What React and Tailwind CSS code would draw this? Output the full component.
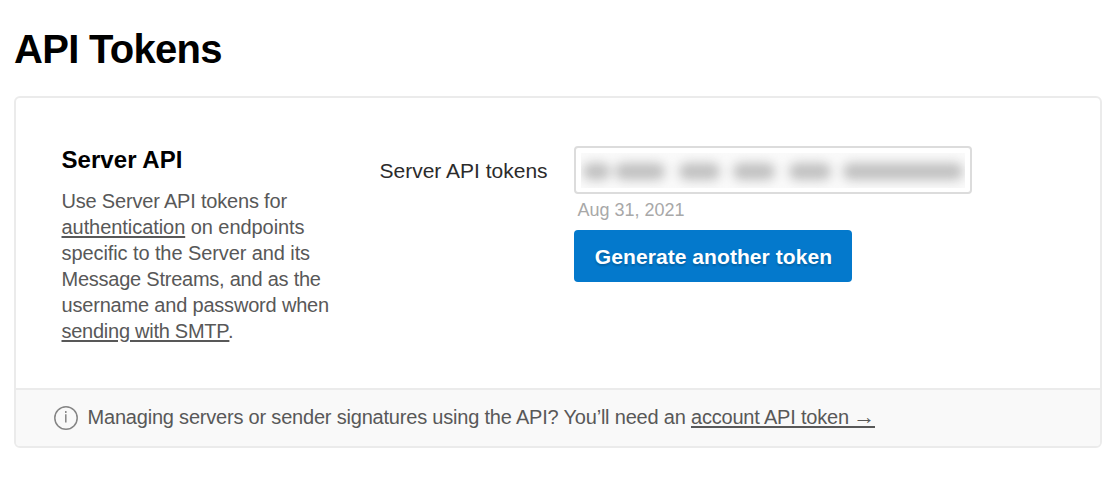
const link = "underline decoration-2 underline-offset-2";

// Widths and gaps of the obscured token groups
const tokenGroups = [
  { width: 27, gap: 5 },
  { width: 50, gap: 14 },
  { width: 41, gap: 13 },
  { width: 42, gap: 14 },
  { width: 42, gap: 12 },
  { width: 120, gap: 0 },
];

function InfoIcon() {
  return (
    <svg width="24" height="24" viewBox="0 0 24 24" fill="none" className="shrink-0">
      <circle cx="12" cy="12" r="11.2" stroke="#858585" strokeWidth="1.5" />
      <path d="M11.8 5V7M11.8 8.2V16.6" stroke="#858585" strokeWidth="1.5" />
    </svg>
  );
}

function MaskedToken() {
  return (
    <div className="flex h-12 w-[398px] items-center rounded-[4px] border-2 border-[#dcdcdc] bg-white px-[5px]">
      <div className="flex h-[35px] w-full items-center overflow-hidden bg-[#fafafa] pt-[3px] pl-[2px]">
        <div className="flex blur-[5.5px]">
          {tokenGroups.map(({ width, gap }, i) => (
            <span
              key={i}
              className="h-[17px] shrink-0 rounded-lg bg-[#c0c0c0]"
              style={{ width, marginRight: gap }}
            />
          ))}
        </div>
      </div>
    </div>
  );
}

export default function App() {
  return (
    <div className="min-h-[489px] w-[1116px] bg-white px-[14px] pt-[25px] font-['Liberation_Sans',Arial,sans-serif] text-xl leading-[26px] tracking-[-0.19px] text-[#585858]">
      <h1 className="text-[40px] leading-[48px] font-bold tracking-[-0.7px] text-black">
        API Tokens
      </h1>

      <section className="mt-[23px] w-[1088px] overflow-hidden rounded-[6px] border-2 border-[#ebebeb]">
        <div className="flex h-[290px] pl-[45.5px]">
          {/* Description */}
          <div className="w-[318px] pt-[47px]">
            <h2 className="text-2xl leading-[30px] font-bold tracking-[0.05px] text-black">
              Server API
            </h2>
            <p className="mt-[13px] whitespace-nowrap">
              Use Server API tokens for
              <br />
              <span className="tracking-[-0.06px]">
                <a className={link}>authentication</a> on endpoints
              </span>
              <br />
              <span className="tracking-[-0.09px]">specific to the Server and its</span>
              <br />
              <span className="tracking-[-0.24px]">Message Streams, and as the</span>
              <br />
              username and password when
              <br />
              <span className="tracking-[-0.26px]">
                <a className={link}>sending with SMTP</a>
              </span>
              <span className="-ml-[1.5px]">.</span>
            </p>
          </div>

          {/* Tokens */}
          <div className="w-[194.5px] pt-[60px] text-[21px] tracking-normal text-[#2b2b2b]">
            Server API tokens
          </div>
          <div className="pt-12">
            <MaskedToken />
            <p className="mt-[5px] pl-[3.5px] text-lg leading-[22px] tracking-normal text-[#a8a8a8]">
              Aug 31, 2021
            </p>
            <button className="mt-[9px] flex h-[52px] w-[278px] items-center justify-center rounded-[4px] bg-[#0479cc] pt-px pl-px text-[21px] font-bold tracking-[0.07px] text-white text-shadow-[0_2px_2px_rgb(0_0_0/0.2)]">
              Generate another token
            </button>
          </div>
        </div>

        {/* Footer note */}
        <div className="flex h-[58px] items-center gap-[9.5px] border-t-2 border-[#ebebeb] bg-[#f9f9f9] pl-[38px]">
          <InfoIcon />
          <p className="-mt-0.5 whitespace-nowrap tracking-[-0.2px]">
            Managing servers or sender signatures using the API? You’ll need an{" "}
            <a className={link}>
              account API token <span className="-ml-px text-[22px] leading-none">→</span>
            </a>
          </p>
        </div>
      </section>
    </div>
  );
}
